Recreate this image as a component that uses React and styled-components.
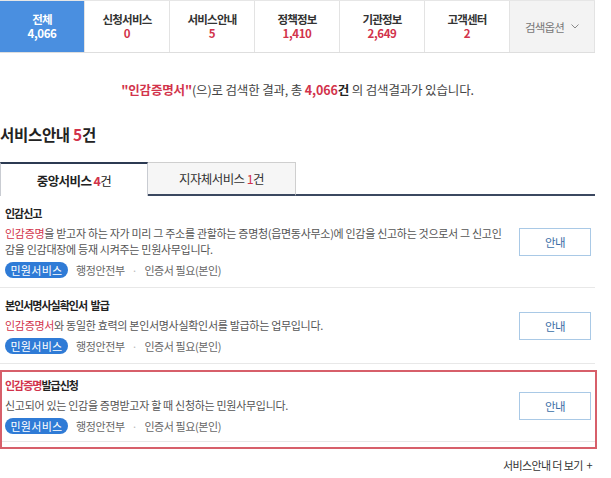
import React from 'react';
import styled, { createGlobalStyle } from 'styled-components';

const GlobalStyle = createGlobalStyle`
  body {
    margin: 0;
    background: #fff;
    font-family: "Noto Sans CJK KR", "Noto Sans", sans-serif;
    color: #333;
  }
`;

const Page = styled.div`
  width: 595px;
`;

const Nav = styled.ul`
  list-style: none;
  margin: 0;
  padding: 0;
  display: grid;
  grid-template-columns: repeat(7, 85px);
  height: 53px;
  border-top: 1px solid #e6e6e6;
  border-bottom: 1px solid #dedede;
  box-sizing: border-box;
`;

const NavCell = styled.li`
  display: flex;
  flex-direction: column;
  align-items: center;
  justify-content: center;
  gap: 1px;
  border-right: 1px solid #e3e3e3;
  background: ${({ $active }) => ($active ? '#4a8fe0' : '#fff')};
  color: ${({ $active }) => ($active ? '#fff' : '#333')};
  font-size: 11.5px;
  letter-spacing: -0.8px;
  font-weight: 700;
  line-height: 13px;
`;

const NavCount = styled.span`
  color: ${({ $active }) => ($active ? '#fff' : '#d2334b')};
  letter-spacing: -0.4px;
`;

const OptionCell = styled.li`
  display: flex;
  align-items: center;
  justify-content: center;
  gap: 7px;
  background: #f3f3f3;
  color: #777;
  font-size: 11.5px;
  letter-spacing: -0.8px;
  border-right: 1px solid #e3e3e3;
`;

const Result = styled.p`
  margin: 28px 0 0;
  text-align: center;
  font-size: 12.5px;
  line-height: 18px;
  letter-spacing: -0.15px;
  color: #444;
`;

const Red = styled.strong`
  color: #d2334b;
  font-weight: ${({ $light }) => ($light ? 400 : 700)};
`;

const Dark = styled.strong`
  color: #222;
  font-weight: 700;
`;

const Light = styled.span`
  font-weight: 400;
`;

const Heading = styled.h2`
  margin: 25px 0 0;
  font-size: 15.5px;
  line-height: 20px;
  letter-spacing: -0.3px;
  font-weight: 700;
  color: #222;
`;

const TabRow = styled.div`
  display: flex;
  margin-top: 18px;
  height: 34px;
`;

const Tab = styled.div`
  width: 148px;
  display: flex;
  align-items: center;
  justify-content: center;
  box-sizing: border-box;
  font-size: 12.5px;
  letter-spacing: -0.6px;
  ${({ $active }) =>
    $active
      ? `
    border: 1px solid #c9ccd2;
    border-top: 2px solid #2c3a52;
    border-bottom: none;
    background: #fff;
    color: #222;
    font-weight: 700;
  `
      : `
    border: 1px solid #cfcfcf;
    border-left: none;
    border-bottom: 2px solid #3b4860;
    background: #f6f6f6;
    color: #333;
  `}
`;

const TabFill = styled.div`
  flex: 1;
  border-bottom: 2px solid #3b4860;
`;

const Item = styled.div`
  display: flex;
  align-items: center;
  padding: ${({ $boxed }) => ($boxed ? '5px 4px 7px 3px' : '9px 4px 9px 5px')};
  border-bottom: 1px solid #e8e8e8;
`;

const ItemBody = styled.div`
  flex: 1;
`;

const Title = styled.div`
  font-size: 11px;
  line-height: 16px;
  font-weight: 700;
  letter-spacing: -1px;
  word-spacing: 2px;
  color: #222;
`;

const Desc = styled.p`
  margin: 4px 0 0;
  font-size: 11px;
  line-height: 16px;
  letter-spacing: -0.3px;
  color: #555;
`;

const Hl = styled.span`
  color: #d2334b;
`;

const Meta = styled.div`
  display: flex;
  align-items: center;
  margin-top: 5px;
  font-size: 11px;
  letter-spacing: -0.4px;
  color: #666;
`;

const Chip = styled.span`
  display: inline-flex;
  align-items: center;
  justify-content: center;
  height: 16px;
  width: 63px;
  border-radius: 8px;
  background: #2f7bd6;
  color: #fff;
  font-size: 11px;
  letter-spacing: 0.3px;
  margin-right: 8px;
`;

const Dot = styled.span`
  color: #bbb;
  margin: 0 7px;
`;

const GuideButton = styled.button`
  width: 72px;
  height: 28px;
  border: 1px solid #a9c9e6;
  background: #fff;
  color: #3a6da6;
  font-family: inherit;
  font-size: 11.5px;
  letter-spacing: -0.5px;
  flex-shrink: 0;
`;

const Highlight = styled.div`
  margin: 6px -2px 0 0;
  border: 2px solid #d75f6a;
  padding-bottom: 5px;
`;

const More = styled.div`
  margin-top: 8px;
  text-align: right;
  font-size: 11px;
  letter-spacing: -0.6px;
  color: #333;
  padding-right: 3px;
`;

const navItems = [
  { label: '전체', count: '4,066', active: true },
  { label: '신청서비스', count: '0' },
  { label: '서비스안내', count: '5' },
  { label: '정책정보', count: '1,410' },
  { label: '기관정보', count: '2,649' },
  { label: '고객센터', count: '2' },
];

const MetaRow = () => (
  <Meta>
    <Chip>민원서비스</Chip>
    행정안전부<Dot>·</Dot>인증서 필요(본인)
  </Meta>
);

const App = () => (
  <Page>
    <GlobalStyle />
    <Nav>
      {navItems.map((n) => (
        <NavCell key={n.label} $active={n.active}>
          <span>{n.label}</span>
          <NavCount $active={n.active}>{n.count}</NavCount>
        </NavCell>
      ))}
      <OptionCell>
        검색옵션
        <svg width="8" height="5" viewBox="0 0 8 5">
          <path d="M0.5 0.5 L4 4 L7.5 0.5" fill="none" stroke="#888" strokeWidth="1" />
        </svg>
      </OptionCell>
    </Nav>

    <Result>
      <Red>"인감증명서"</Red>(으)로 검색한 결과, 총 <Red>4,066</Red><Dark>건</Dark> 의 검색결과가 있습니다.
    </Result>

    <Heading>
      서비스안내 <Red>5</Red>건
    </Heading>

    <TabRow>
      <Tab $active>
        중앙서비스&nbsp;<Red>4</Red><Light>건</Light>
      </Tab>
      <Tab>
        지자체서비스&nbsp;<Red $light>1</Red>건
      </Tab>
      <TabFill />
    </TabRow>

    <Item>
      <ItemBody>
        <Title>인감신고</Title>
        <Desc>
          <Hl>인감증명</Hl>을 받고자 하는 자가 미리 그 주소를 관할하는 증명청(읍면동사무소)에 인감을 신고하는 것으로서 그 신고인
          <br />
          감을 인감대장에 등재 시켜주는 민원사무입니다.
        </Desc>
        <MetaRow />
      </ItemBody>
      <GuideButton>안내</GuideButton>
    </Item>

    <Item>
      <ItemBody>
        <Title>본인서명사실확인서 발급</Title>
        <Desc>
          <Hl>인감증명서</Hl>와 동일한 효력의 본인서명사실확인서를 발급하는 업무입니다.
        </Desc>
        <MetaRow />
      </ItemBody>
      <GuideButton>안내</GuideButton>
    </Item>

    <Highlight>
      <Item $boxed>
        <ItemBody>
          <Title>
            <Hl>인감증명</Hl>발급신청
          </Title>
          <Desc>신고되어 있는 인감을 증명받고자 할 때 신청하는 민원사무입니다.</Desc>
          <MetaRow />
        </ItemBody>
        <GuideButton>안내</GuideButton>
      </Item>
    </Highlight>

    <More>서비스안내 더 보기 &nbsp;+</More>
  </Page>
);

export default App;
